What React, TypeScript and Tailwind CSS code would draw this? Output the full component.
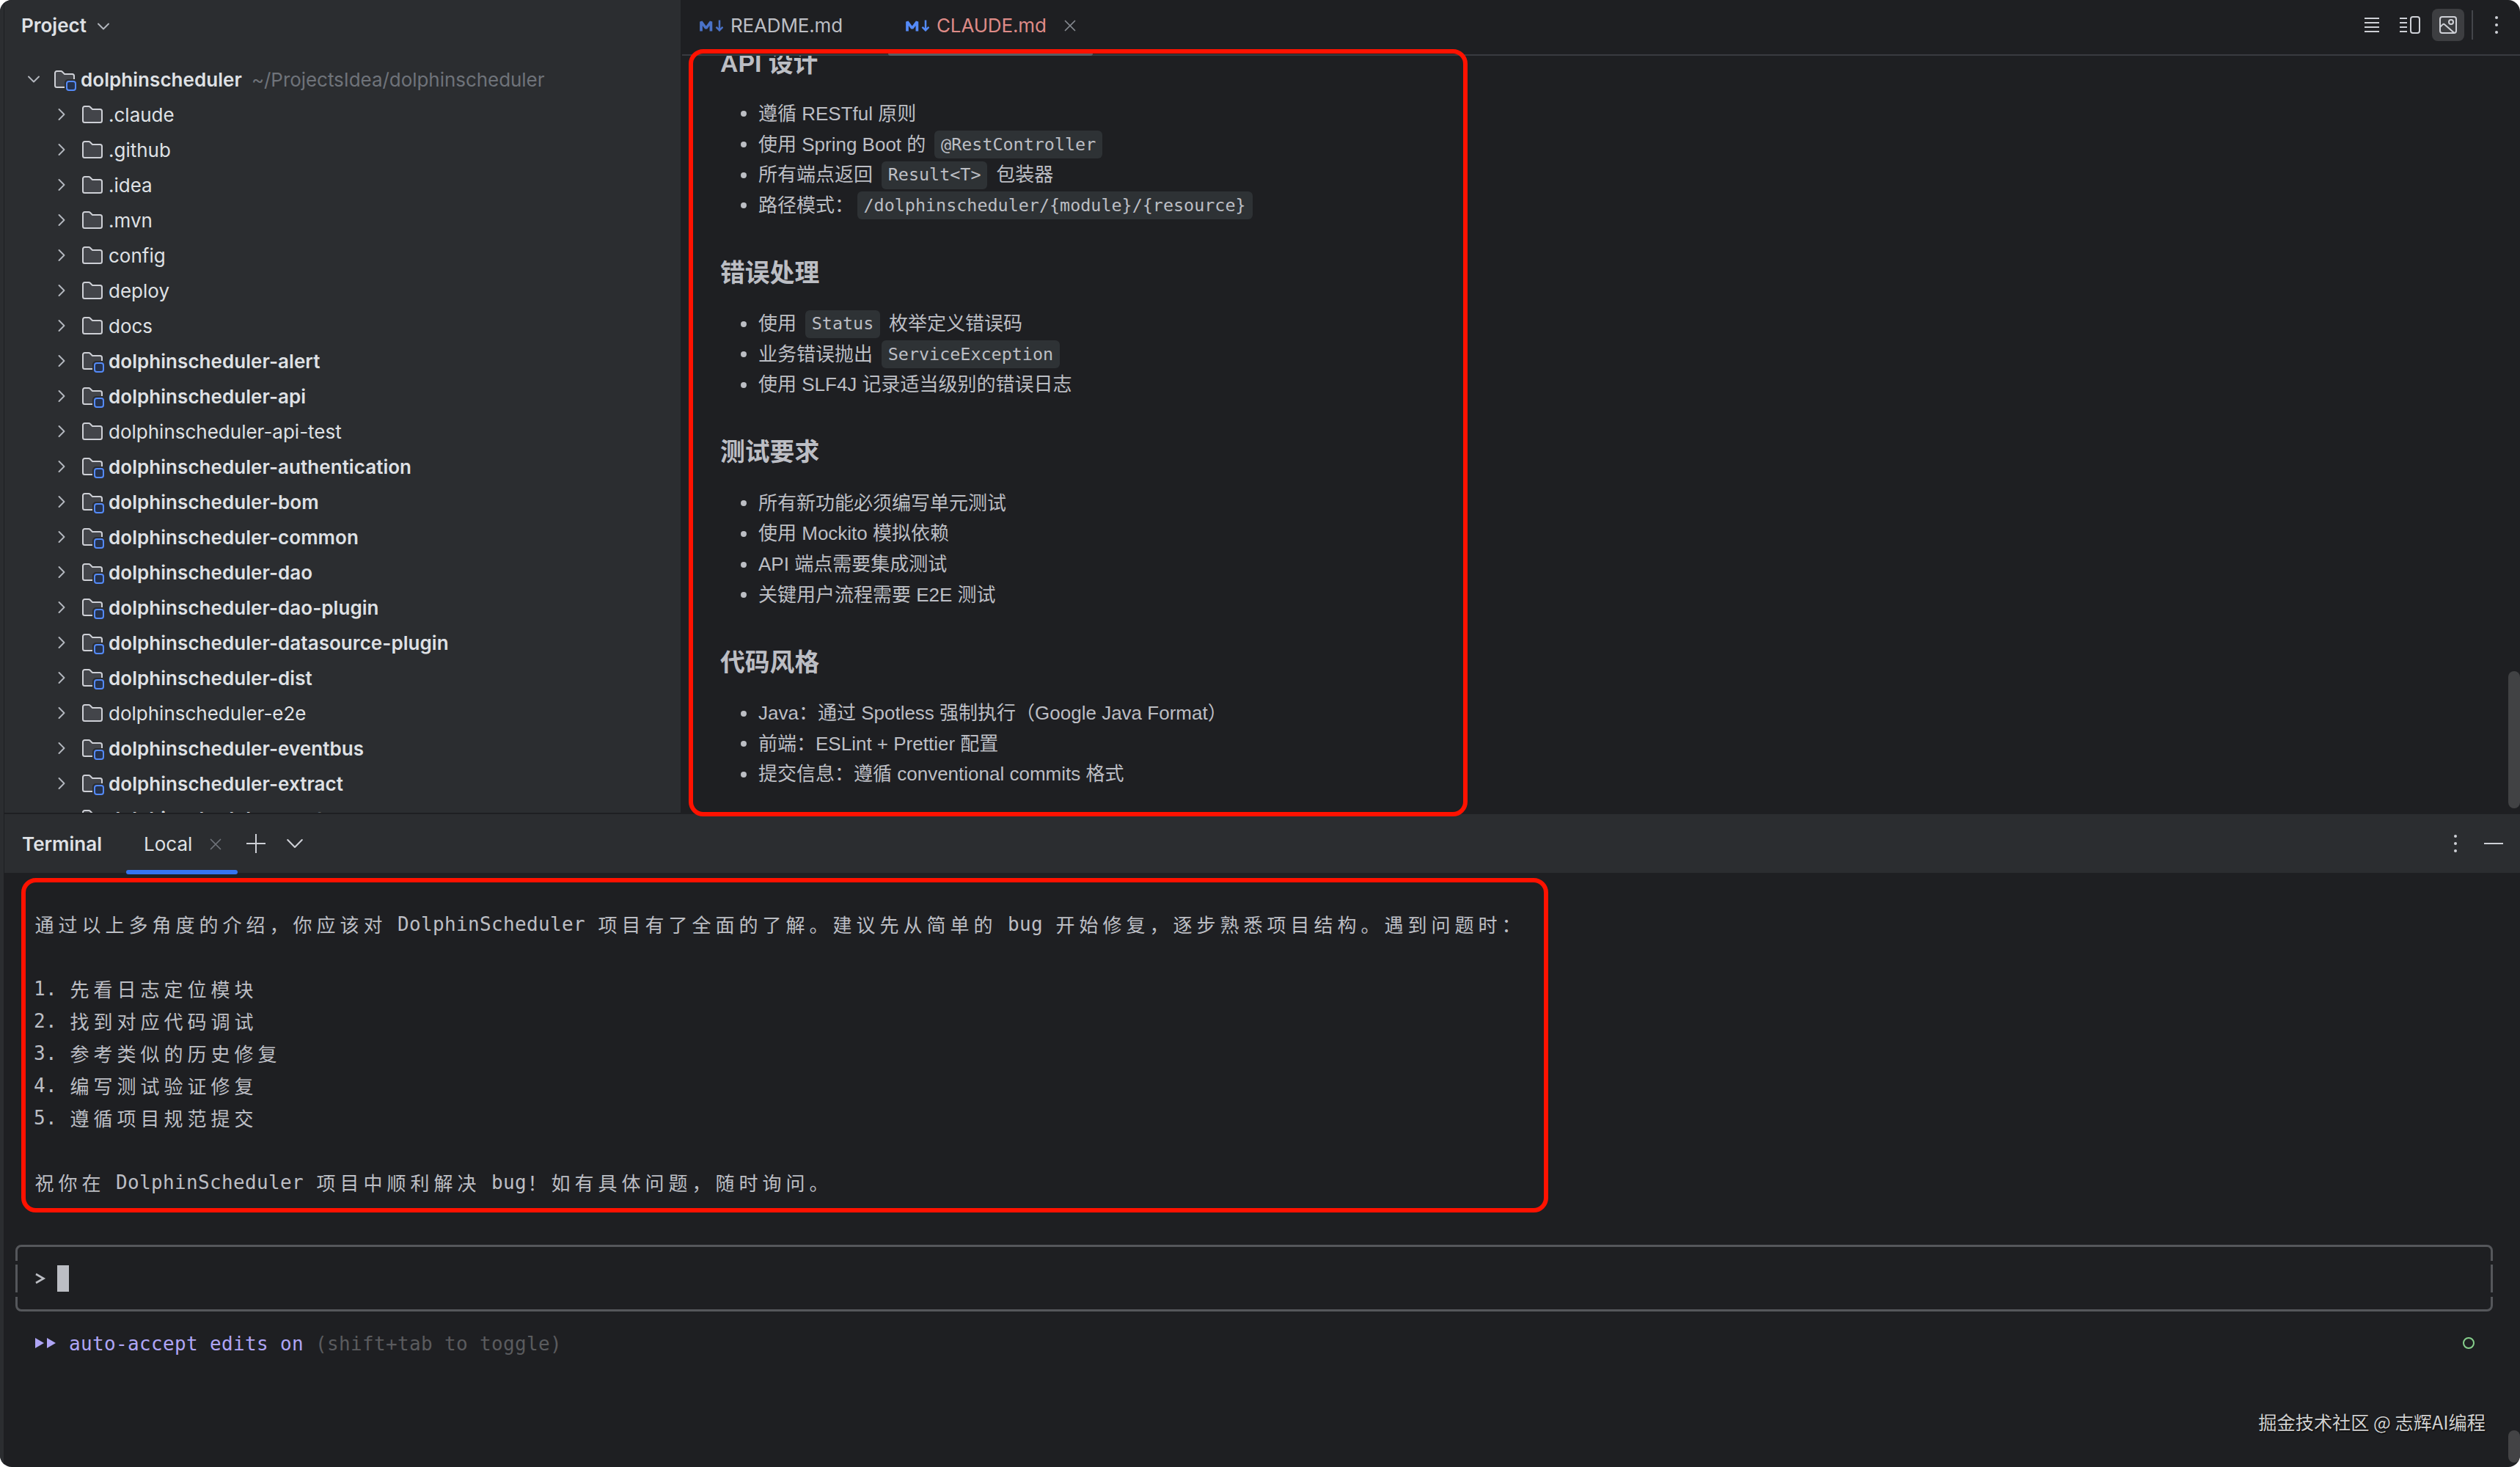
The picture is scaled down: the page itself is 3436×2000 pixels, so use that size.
import type { ReactNode } from "react";

type Row = { name: string; module?: boolean };

const rows: Row[] = [
  { name: ".claude" },
  { name: ".github" },
  { name: ".idea" },
  { name: ".mvn" },
  { name: "config" },
  { name: "deploy" },
  { name: "docs" },
  { name: "dolphinscheduler-alert", module: true },
  { name: "dolphinscheduler-api", module: true },
  { name: "dolphinscheduler-api-test" },
  { name: "dolphinscheduler-authentication", module: true },
  { name: "dolphinscheduler-bom", module: true },
  { name: "dolphinscheduler-common", module: true },
  { name: "dolphinscheduler-dao", module: true },
  { name: "dolphinscheduler-dao-plugin", module: true },
  { name: "dolphinscheduler-datasource-plugin", module: true },
  { name: "dolphinscheduler-dist", module: true },
  { name: "dolphinscheduler-e2e" },
  { name: "dolphinscheduler-eventbus", module: true },
  { name: "dolphinscheduler-extract", module: true },
  { name: "dolphinscheduler-master", module: true },
];

function Folder({ module }: { module?: boolean }) {
  return (
    <svg className="h-8 w-8 shrink-0" viewBox="0 0 32 32" fill="none">
      <path
        d="M3 7.500A2.500 2.500 0 0 1 5.500 5H11a2.500 2.500 0 0 1 1.800.7L16 9h10.500A2.500 2.500 0 0 1 29 11.500V24.500A2.500 2.500 0 0 1 26.500 27H5.500A2.500 2.500 0 0 1 3 24.500Z"
        fill="#43454a"
        stroke="#ced0d6"
        strokeWidth="2"
      />
      {module && (
        <>
          <path d="M16 32V21a5 5 0 0 1 5-5h11v16Z" fill="#2b2d30" />
          <rect x="19" y="19" width="12" height="12" rx="3" fill="#25324d" stroke="#548af7" strokeWidth="2" />
        </>
      )}
    </svg>
  );
}

function Chevron({ className, down, thin }: { className: string; down?: boolean; thin?: boolean }) {
  return (
    <svg className={className} viewBox="0 0 20 20" fill="none" stroke="currentColor" strokeWidth={thin ? 1.5 : 1.9} strokeLinecap="round" strokeLinejoin="round">
      <path d={down ? "M3 6.500l7 7 7-7" : "M6.500 3l7 7-7 7"} />
    </svg>
  );
}

function Close({ className }: { className: string }) {
  return (
    <svg className={className} viewBox="0 0 16 16" fill="none" stroke="currentColor" strokeWidth="1.7" strokeLinecap="round">
      <path d="M1.500 1.500l13 13M14.500 1.500l-13 13" />
    </svg>
  );
}

function Dots() {
  return (
    <svg className="h-6 w-2 shrink-0" viewBox="0 0 8 24" fill="#ced0d6">
      <circle cx="4" cy="2" r="2" />
      <circle cx="4" cy="12" r="2" />
      <circle cx="4" cy="22" r="2" />
    </svg>
  );
}

function MdMark({ className }: { className: string }) {
  return (
    <svg className={className} viewBox="0 0 32 16" fill="none" stroke="currentColor">
      <path d="M2 15.500V2.500L8.700 11.500l6.700-9V15.500" strokeWidth="3.700" strokeLinejoin="bevel" />
      <path d="M27 .500V14M22.500 9.800l4.500 4.500 4.500-4.500" strokeWidth="2.500" />
    </svg>
  );
}

function Code({ children }: { children: ReactNode }) {
  return (
    <code className="mx-[4.500px] flex h-[38px] items-center rounded-[6px] bg-[#2e3235] px-[9px] font-['DejaVu_Sans_Mono',monospace] text-[23.400px]">
      {children}
    </code>
  );
}

function Section({ title, children }: { title: string; children: ReactNode }) {
  return (
    <section>
      <h3 className="mb-[28.200px] h-[42px] text-[33.800px] leading-[42px] font-bold">{title}</h3>
      <ul className="mb-[49.700px]">{children}</ul>
    </section>
  );
}

function Item({ children }: { children: ReactNode }) {
  return (
    <li className="flex h-[41.600px] items-center whitespace-pre">
      <span className="mr-4 ml-7 h-2 w-2 shrink-0 rounded-full bg-[#bcbec4]" />
      {children}
    </li>
  );
}

/* Wide characters take two 16px terminal cells, Latin ones take a single cell. */
function Wide({ children }: { children: ReactNode }) {
  return (
    <span className="mr-[-1.500px] ml-[1.500px] font-['Noto_Sans_CJK_SC',sans-serif] text-[26px] tracking-[6px]">{children}</span>
  );
}

function Mono({ children }: { children: ReactNode }) {
  return <span className="mt-[2px]">{children}</span>;
}

function Line({ children }: { children?: ReactNode }) {
  return <div className="flex h-11 items-center whitespace-pre">{children}</div>;
}

const steps = ["先看日志定位模块", "找到对应代码调试", "参考类似的历史修复", "编写测试验证修复", "遵循项目规范提交"];

export default function App() {
  return (
    <div className="h-[2000px] w-[3436px] bg-white">
      <div className="relative flex h-full w-full overflow-hidden rounded-[16px] bg-[#1e1f22] font-['Inter','Noto_Sans_CJK_SC',sans-serif] text-[26px] text-[#dfe1e5]">
        <div className="w-[6px] shrink-0 border-r border-[#1e1f22] bg-[#2b2d30]" />
        <div className="flex min-w-0 flex-1 flex-col">
          <div className="flex h-[1108px] shrink-0">
            <aside className="flex w-[922px] shrink-0 flex-col overflow-hidden bg-[#2b2d30]">
              <div className="flex h-[69px] shrink-0 items-center pl-[23px] font-semibold">
                Project
                <Chevron down className="mt-[3px] ml-[13px] h-5 w-5 text-[#b4b8bf]" />
              </div>
              <div className="mt-[15px] flex h-12 shrink-0 items-center pl-[30px]">
                <Chevron down className="h-5 w-5 text-[#b4b8bf]" />
                <span className="mr-[6px] ml-4 flex"><Folder module /></span>
                <span className="mt-px font-semibold tracking-[0.050px]">dolphinscheduler</span>
                <span className="mt-px ml-[13px] tracking-[-0.050px] text-[#6f737a]">~/ProjectsIdea/dolphinscheduler</span>
              </div>
              {rows.map((r) => (
                <div key={r.name} className="flex h-12 shrink-0 items-center pl-[68px]">
                  <Chevron className="h-5 w-5 text-[#b4b8bf]" />
                  <span className="mr-[6px] ml-4 flex"><Folder module={r.module} /></span>
                  <span className={r.module ? "mt-px font-semibold tracking-[0.050px]" : "mt-px"}>{r.name}</span>
                </div>
              ))}
            </aside>

            <main className="flex min-w-0 flex-1 flex-col pl-[2px]">
              <div className="flex h-[76px] shrink-0 border-b-2 border-[#393b40]">
                <div className="flex h-[69px] w-[281px] items-center pl-6 tracking-[-0.150px] text-[#bcbec4]">
                  <MdMark className="mr-[10px] h-4 w-8 text-[#4a72c8]" />
                  README.md
                </div>
                <div className="relative flex h-[69px] w-[279px] items-center pl-6 tracking-[-0.150px] text-[#de8b87]">
                  <MdMark className="mr-[10px] h-4 w-8 text-[#548af7]" />
                  CLAUDE.md
                  <Close className="ml-6 h-4 w-4 text-[#868a91]" />
                  <div className="absolute top-[70px] left-0 h-[6px] w-full rounded-[3px] bg-[#5a5d63]" />
                </div>
                <div className="ml-auto flex h-[68px] items-center pr-7">
                  <svg className="mr-7 h-6 w-5" viewBox="0 0 20 24" stroke="#ced0d6" strokeWidth="2">
                    <path d="M0 3h20M0 9h20M0 15h20M0 21h20" />
                  </svg>
                  <svg className="mr-4 h-6 w-7" viewBox="0 0 28 24" fill="none" stroke="#ced0d6" strokeWidth="2">
                    <path d="M0 3h10M0 9h10M0 15h10M0 21h10" />
                    <rect x="15" y="1" width="12" height="22" rx="3" />
                  </svg>
                  <div className="flex h-11 w-11 items-center justify-center rounded-[8px] bg-[#3d3e41]">
                    <svg className="h-6 w-6" viewBox="0 0 24 24" fill="none" stroke="#ced0d6" strokeWidth="2">
                      <rect x="1" y="1" width="22" height="22" rx="3" />
                      <circle cx="16" cy="8" r="3" />
                      <path d="M1 15l3.600-3.600a2 2 0 0 1 2.700 0L20.500 23" />
                    </svg>
                  </div>
                  <div className="mr-7 ml-[10px] h-10 w-[2px] bg-[#43454a]" />
                  <Dots />
                </div>
              </div>
              <div className="relative flex-1 overflow-hidden">
                <article className="-mt-[11.500px] pl-[52px] font-['Liberation_Sans','Noto_Sans_CJK_SC',sans-serif] text-[26px] text-[#bcbec4]">
                  <Section title="API 设计">
                    <Item>遵循 RESTful 原则</Item>
                    <Item>使用 Spring Boot 的 <Code>@RestController</Code></Item>
                    <Item>所有端点返回 <Code>{"Result<T>"}</Code> 包装器</Item>
                    <Item>路径模式：<Code>{"/dolphinscheduler/{module}/{resource}"}</Code></Item>
                  </Section>
                  <Section title="错误处理">
                    <Item>使用 <Code>Status</Code> 枚举定义错误码</Item>
                    <Item>业务错误抛出 <Code>ServiceException</Code></Item>
                    <Item>使用 SLF4J 记录适当级别的错误日志</Item>
                  </Section>
                  <Section title="测试要求">
                    <Item>所有新功能必须编写单元测试</Item>
                    <Item>使用 Mockito 模拟依赖</Item>
                    <Item>API 端点需要集成测试</Item>
                    <Item>关键用户流程需要 E2E 测试</Item>
                  </Section>
                  <Section title="代码风格">
                    <Item>Java：通过 Spotless 强制执行（Google Java Format）</Item>
                    <Item>前端：ESLint + Prettier 配置</Item>
                    <Item>提交信息：遵循 conventional commits 格式</Item>
                  </Section>
                </article>
                <div className="absolute top-[839px] right-0 h-[187px] w-4 rounded-full bg-[#414244]" />
              </div>
            </main>
          </div>

          <div className="flex h-[82px] shrink-0 items-center border-t-2 border-[#1e1f22] bg-[#2b2d30]">
            <span className="w-[141px] pl-6 font-semibold">Terminal</span>
            <div className="relative ml-[25px] flex h-full w-[152px] items-center pl-[24px]">
              Local
              <Close className="mt-[2px] ml-6 h-4 w-4 text-[#6f737a]" />
              <div className="absolute -bottom-[2px] left-0 h-[6px] w-full rounded-[3px] bg-[#3574f0]" />
            </div>
            <svg className="ml-3 h-[26px] w-[26px]" viewBox="0 0 26 26" stroke="#ced0d6" strokeWidth="2">
              <path d="M13 0v26M0 13h26" />
            </svg>
            <Chevron down thin className="ml-[26px] h-7 w-7 text-[#ced0d6]" />
            <div className="mr-[23px] ml-auto flex items-center gap-[35px]">
              <Dots />
              <div className="h-[2px] w-[26px] bg-[#ced0d6]" />
            </div>
          </div>

          <div className="flex-1 pt-[47px] font-['DejaVu_Sans_Mono','Noto_Sans_CJK_SC',monospace] text-[26px] tracking-[0.347px] text-[#bcbec4]">
            <div className="pl-10">
              <Line>
                <Wide>通过以上多角度的介绍，你应该对</Wide>
                <Mono>{" DolphinScheduler "}</Mono>
                <Wide>项目有了全面的了解。建议先从简单的</Wide>
                <Mono>{" bug "}</Mono>
                <Wide>开始修复，逐步熟悉项目结构。遇到问题时：</Wide>
              </Line>
              <Line />
              {steps.map((s, i) => (
                <Line key={s}>
                  <Mono>{`${i + 1}. `}</Mono>
                  <Wide>{s}</Wide>
                </Line>
              ))}
              <Line />
              <Line>
                <Wide>祝你在</Wide>
                <Mono>{" DolphinScheduler "}</Mono>
                <Wide>项目中顺利解决</Wide>
                <Mono>{" bug"}</Mono>
                <Wide>！如有具体问题，随时询问。</Wide>
              </Line>
            </div>
            <div className="relative mt-[64px] ml-[15px] flex h-[91px] w-[3378px] items-center rounded-[8px] border-[3px] border-[#55575b] pl-[24px]">
              <svg className="h-[18px] w-4" viewBox="0 0 16 18" fill="none" stroke="#bcbec4" strokeWidth="2.600">
                <path d="M1 3l10.500 6L1 15" />
              </svg>
              <div className="ml-[14px] h-9 w-4 bg-[#bcbec4]" />
              <div className="absolute top-[19px] -left-[3px] h-[5px] w-[3378px] bg-[#1e1f22]" />
              <div className="absolute top-[62px] -left-[3px] h-[6px] w-[3378px] bg-[#1e1f22]" />
            </div>
            <div className="mt-[21px] flex h-11 items-center whitespace-pre pl-[42px] text-[#afa5f5]">
              <svg className="mr-[17px] h-[14px] w-[29px]" viewBox="0 0 29 14" fill="currentColor">
                <path d="M0 0l12 7-12 7ZM16 0l12 7-12 7Z" />
              </svg>
              <Mono>{"auto-accept edits on "}</Mono>
              <span className="mt-[2px] text-[#5a5b5e]">(shift+tab to toggle)</span>
              <div className="mr-[62px] ml-auto h-4 w-4 rounded-full border-2 border-[#86cf8c]" />
            </div>
          </div>
        </div>

        <div className="absolute top-[67px] left-[939px] h-[1046px] w-[1062px] rounded-[20px] border-[6px] border-[#ff1200]" />
        <div className="absolute top-[1197px] left-[29px] h-[456px] w-[2082px] rounded-[20px] border-[6px] border-[#ff1200]" />
        <div className="absolute right-0 bottom-[6px] h-11 w-4 rounded-full bg-[#434345]" />
        <div className="absolute right-[47px] bottom-[42px] font-['Noto_Sans_CJK_SC',sans-serif] text-[25.200px] text-[#cfcfcf] [text-shadow:1px_1px_2px_#000]">
          掘金技术社区 @ 志辉AI编程
        </div>
      </div>
    </div>
  );
}
